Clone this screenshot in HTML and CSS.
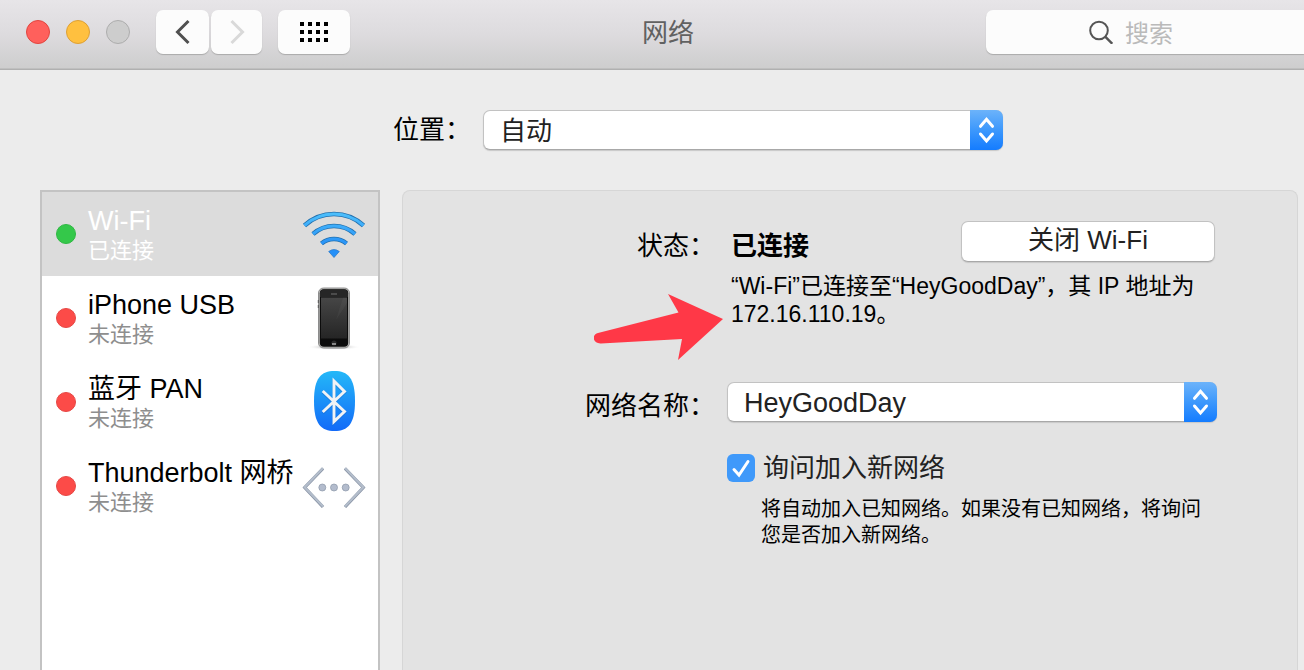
FILE: index.html
```html
<!DOCTYPE html>
<html lang="zh-CN">
<head>
<meta charset="utf-8">
<title>网络</title>
<link rel="stylesheet" href="styles.css">
</head>
<body>
<header class="toolbar">
  <div class="toolbar-left">
    <div class="lights">
      <button class="light light-close" aria-label="关闭"></button>
      <button class="light light-min" aria-label="最小化"></button>
      <button class="light light-zoom" aria-label="缩放" disabled></button>
    </div>
    <div class="history">
      <button class="tool tool-back" aria-label="后退">
        <svg width="16" height="26" viewBox="0 0 16 26"><path d="M13.500 2 2.500 13 13.500 24" fill="none" stroke="#505050" stroke-width="3"/></svg>
      </button>
      <button class="tool tool-forward" aria-label="前进" disabled>
        <svg width="16" height="26" viewBox="0 0 16 26"><path d="M2.500 2 13.500 13 2.500 24" fill="none" stroke="#d9d9d9" stroke-width="3"/></svg>
      </button>
    </div>
    <button class="tool tool-all" aria-label="显示全部">
      <svg width="28" height="20" viewBox="0 0 28 20"><path d="M0 0h4v4H0zM8 0h4v4H8zM16 0h4v4h-4zM24 0h4v4h-4zM0 8h4v4H0zM8 8h4v4H8zM16 8h4v4h-4zM24 8h4v4h-4zM0 16h4v4H0zM8 16h4v4H8zM16 16h4v4h-4zM24 16h4v4h-4z"/></svg>
    </button>
  </div>
  <h1 class="title">网络</h1>
  <div class="search">
    <svg width="24" height="24" viewBox="0 0 24 24"><g fill="none" stroke="#555" stroke-width="2"><circle cx="10" cy="10.500" r="8.800"/><path d="M16.200 16.700 23.300 23.800" stroke-width="2.400"/></g></svg>
    <input class="search-input" type="search" placeholder="搜索" aria-label="搜索">
  </div>
</header>

<main class="content">
  <div class="location">
    <label class="label" for="location">位置：</label>
    <div class="popup popup-location">
      <select class="popup-select" id="location"><option>自动</option></select>
      <svg class="popup-arrows" viewBox="0 0 33 40"><path d="M10.500 16.300 16.500 9.300l6 7M10.500 24 16.500 31l6-7"/></svg>
    </div>
  </div>

  <div class="panes">
    <ul class="services">
      <li class="service service-selected">
        <span class="dot dot-on"></span>
        <div class="service-text">
          <div class="service-name">Wi-Fi</div>
          <div class="service-state">已连接</div>
        </div>
        <svg class="service-icon" viewBox="0 0 64 64">
          <defs>
            <linearGradient id="wave" gradientUnits="userSpaceOnUse" x1="0" y1="9" x2="0" y2="50"><stop offset="0" stop-color="#4fc2fb"/><stop offset="1" stop-color="#1f87f6"/></linearGradient>
            <g id="arcs"><path d="M2.500 23.500A43.600 43.600 0 0 1 61.500 23.500M11 32A31.500 31.500 0 0 1 53 32M19.500 41.500A19.600 19.600 0 0 1 44.500 41.500"/></g>
          </defs>
          <use href="#arcs" fill="none" stroke="#2270ae" stroke-width="4.600"/>
          <use href="#arcs" fill="none" stroke="url(#wave)" stroke-width="3.200"/>
          <path d="M26.700 49.500Q32 45.500 37.300 49.500L32 55.500Z" fill="#2490f8" stroke="#2276c8" stroke-width=".7"/>
        </svg>
      </li>
      <li class="service">
        <span class="dot dot-off"></span>
        <div class="service-text">
          <div class="service-name">iPhone USB</div>
          <div class="service-state">未连接</div>
        </div>
        <svg class="service-icon" viewBox="0 0 64 64">
          <defs>
            <linearGradient id="screen" x1="0" y1="0" x2="0" y2="1"><stop offset="0" stop-color="#464646"/><stop offset="1" stop-color="#252525"/></linearGradient>
            <radialGradient id="shade"><stop offset="0" stop-color="#777"/><stop offset="1" stop-color="#fff" stop-opacity="0"/></radialGradient>
          </defs>
          <ellipse cx="32" cy="61" rx="27" ry="3" fill="url(#shade)"/>
          <rect x="16.500" y="2" width="31" height="60" rx="5" fill="#bdbdbb" stroke="#777" stroke-width=".8"/>
          <rect x="17.800" y="3.300" width="28.400" height="57.400" rx="4" fill="#0c0c0c"/>
          <path d="M18 11V7Q18 3.500 22 3.500H42Q46 3.500 46 7V11Z" fill="#262626"/>
          <rect x="19" y="11.500" width="26" height="41" fill="url(#screen)"/>
          <path d="M45 11.500V17L34 34 41 11.500Z" fill="#fff" opacity=".04"/>
          <path d="M29 8h6" stroke="#666" stroke-width="1.200"/>
          <circle cx="32" cy="57" r="2.600" fill="#292929"/>
          <path d="M30 58h4" stroke="#bbb" stroke-width="1.300"/>
          <path d="M16.300 14v3M16.300 19v3" stroke="#555"/>
        </svg>
      </li>
      <li class="service">
        <span class="dot dot-off"></span>
        <div class="service-text">
          <div class="service-name">蓝牙 PAN</div>
          <div class="service-state">未连接</div>
        </div>
        <svg class="service-icon" viewBox="0 0 64 64">
          <defs><linearGradient id="tooth" x1="0" y1="0" x2="0" y2="1"><stop offset="0" stop-color="#24b8f8"/><stop offset="1" stop-color="#126af8"/></linearGradient></defs>
          <path d="M32.500 1C46 1 53 8 53 31S46 61 32.500 61 12 54 12 31 19 1 32.500 1Z" fill="url(#tooth)"/>
          <path d="M20.700 21 42.500 41.500 32 51.500V11L42.500 21.500 20.700 42" fill="none" stroke="#1765c4" stroke-width="3.200" opacity=".4" transform="translate(0 1)"/>
          <path d="M20.700 21 42.500 41.500 32 51.500V11L42.500 21.500 20.700 42" fill="none" stroke="#f1f3f5" stroke-width="2.900"/>
        </svg>
      </li>
      <li class="service">
        <span class="dot dot-off"></span>
        <div class="service-text">
          <div class="service-name">Thunderbolt 网桥</div>
          <div class="service-state">未连接</div>
        </div>
        <svg class="service-icon" viewBox="0 0 64 64">
          <g fill="none" stroke="#8893a5" stroke-width="3.200"><path d="M21 14.500 2.700 33.500 21 53M43 14.500 61.300 33.500 43 53"/></g>
          <g fill="none" stroke="#b3bdcb" stroke-width="2.200"><path d="M21 14 2.700 33.300 21 52.500M43 14 61.300 33.300 43 52.500"/></g>
          <g fill="#b3bccd" stroke="#8b96a8" stroke-width=".7"><circle cx="20.300" cy="33.500" r="3.500"/><circle cx="32" cy="33.500" r="3.500"/><circle cx="43.700" cy="33.500" r="3.500"/></g>
        </svg>
      </li>
    </ul>

    <section class="details">
      <div class="form">
        <span class="label">状态：</span>
        <div class="status">
          <strong class="status-value">已连接</strong>
          <button class="push">关闭 Wi-Fi</button>
        </div>
        <p class="message">“Wi-Fi”已连接至“HeyGoodDay”，其 IP 地址为 172.16.110.19。</p>
        <label class="label" for="ssid">网络名称：</label>
        <div class="popup">
          <select class="popup-select" id="ssid"><option>HeyGoodDay</option></select>
          <svg class="popup-arrows" viewBox="0 0 33 40"><path d="M10.500 16.300 16.500 9.300l6 7M10.500 24 16.500 31l6-7"/></svg>
        </div>
        <div class="join">
          <label class="check">
            <input class="check-input" type="checkbox" checked>
            <svg class="check-mark" viewBox="0 0 28 28"><path d="M7 15.500 12 21 21 7.500"/></svg>
            <span>询问加入新网络</span>
          </label>
          <p class="note">将自动加入已知网络。如果没有已知网络，将询问您是否加入新网络。</p>
        </div>
      </div>
      <svg class="pointer" viewBox="0 0 129 66"><path d="M129 25 84 66 88 45 7 49.500C-1 50-3 41 4 39L84.500 18.500 74 0Z" fill="#ff3847"/></svg>
    </section>
  </div>
</main>
</body>
</html>
```

FILE: styles.css
```css
* {
  box-sizing: border-box;
}

body {
  margin: 0;
  height: 100vh;
  display: flex;
  flex-direction: column;
  overflow: hidden;
  background: #ececec;
  color: #000;
  font: 26px/32px "Liberation Sans", "Noto Sans CJK SC", sans-serif;
}

button,
input,
select {
  font: inherit;
  color: inherit;
  margin: 0;
}

.toolbar {
  flex: none;
  height: 70px;
  display: grid;
  grid-template-columns: 1fr auto 1fr;
  align-items: center;
  padding: 0 0 5px 26px;
  background: linear-gradient(#e7e5e8, #dddbde 50%, #cdcdcd);
  border-bottom: 1px solid #b0b0b0;
  box-shadow: inset 0 -1px #bfbfbf;
}

.toolbar-left,
.lights,
.history {
  display: flex;
  align-items: center;
}

.lights {
  gap: 16px;
  margin-right: 26px;
}

.history {
  gap: 2px;
  margin-right: 16px;
}

.light {
  width: 24px;
  height: 24px;
  padding: 0;
  border: 1px solid;
  border-radius: 50%;
}

.light-close {
  background: #ff605c;
  border-color: #e2453f;
}

.light-min {
  background: #ffc03f;
  border-color: #dea034;
}

.light-zoom {
  background: #cdcdcd;
  border-color: #adadad;
}

.tool {
  display: flex;
  align-items: center;
  justify-content: center;
  height: 44px;
  padding: 0;
  border: 0;
  border-radius: 7px;
  background: #fcfcfc;
  box-shadow: 0 1px 1px #aaa;
}

.tool-back {
  width: 53px;
}

.tool-forward {
  width: 51px;
}

.tool-all {
  width: 72px;
}

.title {
  margin: 0;
  padding: 2px 0 0 6px;
  font-size: 26px;
  font-weight: 400;
  color: #616161;
}

.search {
  justify-self: end;
  display: flex;
  align-items: center;
  gap: 12px;
  width: 318px;
  height: 44px;
  padding-left: 103px;
  border-radius: 7px 0 0 7px;
  background: #fcfcfc;
  box-shadow: 0 1px 1px #aaa;
}

.search svg {
  flex: none;
}

.search-input {
  flex: 1;
  min-width: 0;
  padding: 4px 0 0;
  border: 0;
  outline: 0;
  background: none;
  font-size: 24px;
}

.search-input::placeholder {
  color: #bababa;
}

.content {
  flex: 1;
  min-height: 0;
  display: flex;
  flex-direction: column;
  gap: 40px;
  padding: 40px 6px 0 40px;
}

.location {
  display: flex;
  justify-content: center;
  align-items: center;
  gap: 12px;
  padding-left: 58px;
}

.popup {
  position: relative;
  height: 40px;
}

.popup-location {
  width: 520px;
}

.popup-select {
  appearance: none;
  display: block;
  width: 100%;
  height: 40px;
  padding: 2px 48px 0 16px;
  border: 1px solid #c2c2c2;
  border-bottom-color: #a8a8a8;
  border-radius: 7px;
  background: #fff;
  box-shadow: 0 1px 1px #c8c8c8;
  color: #222;
  font-size: 27px;
}

.popup-location .popup-select {
  font-size: 26px;
}

.popup-arrows {
  position: absolute;
  top: 0;
  right: 0;
  width: 33px;
  height: 40px;
  border-radius: 0 7px 7px 0;
  background: linear-gradient(#6cb3fa, #3d98fc 50%, #147cff);
  fill: none;
  stroke: #fff;
  stroke-width: 3;
  stroke-linecap: round;
  pointer-events: none;
}

.panes {
  flex: 1;
  min-height: 0;
  display: flex;
  gap: 22px;
}

.services {
  flex: none;
  width: 340px;
  margin: 0;
  padding: 0;
  list-style: none;
  background: #fff;
  border: 2px solid #c3c3c3;
  border-bottom: 0;
}

.service {
  display: flex;
  align-items: center;
  height: 84px;
  padding: 0 12px 0 14px;
}

.service-selected {
  background: #dcdcdc;
  color: #fff;
}

.dot {
  flex: none;
  width: 20px;
  height: 20px;
  margin-right: 12px;
  border-radius: 50%;
}

.dot-on {
  background: #34c84a;
  border: 1px solid #2fb843;
}

.dot-off {
  background: #fc4b48;
  border: 1px solid #e64845;
}

.service-text {
  flex: 1;
  min-width: 0;
  padding-top: 2px;
  white-space: nowrap;
}

.service-name {
  font-size: 27px;
  line-height: 32px;
}

.service-state {
  font-size: 22px;
  line-height: 28px;
  color: #8e8e8e;
}

.service-selected .service-state {
  color: #fff;
}

.service-icon {
  flex: none;
  width: 64px;
  height: 64px;
}

.details {
  position: relative;
  flex: 1;
  min-width: 0;
  padding-top: 30px;
  background: #e3e3e3;
  border: 1px solid #d6d6d6;
  border-bottom: 0;
  border-radius: 8px 8px 0 0;
}

.form {
  display: grid;
  grid-template-columns: 312px minmax(0, 490px);
  column-gap: 12px;
  align-items: end;
}

.label {
  text-align: right;
  white-space: nowrap;
}

.status {
  display: flex;
  align-items: end;
  justify-content: space-between;
  padding: 0 2px 0 4px;
}

.status-value {
  font-weight: 700;
}

.push {
  width: 254px;
  height: 41px;
  padding: 0 0 3px;
  border: 1px solid #c2c2c2;
  border-bottom-color: #a8a8a8;
  border-radius: 7px;
  background: #fff;
  box-shadow: 0 1px 1px #c8c8c8;
  color: #222;
  font-size: 26px;
}

.message {
  grid-column: 2;
  margin: 10px 0 54px;
  padding-left: 4px;
  font-size: 23px;
  line-height: 28px;
}

.join {
  grid-column: 2;
  margin-top: 32px;
}

.check {
  position: relative;
  display: flex;
  align-items: center;
  gap: 8px;
  height: 28px;
  color: #222;
}

.check-input {
  appearance: none;
  flex: none;
  width: 28px;
  height: 28px;
  border-radius: 6px;
  background: #3f99fa;
}

.check-mark {
  position: absolute;
  left: 0;
  top: 0;
  width: 28px;
  height: 28px;
  fill: none;
  stroke: #fff;
  stroke-width: 3;
  stroke-linecap: round;
}

.check-input:not(:checked) + .check-mark {
  display: none;
}

.note {
  margin: 14px 0 0;
  padding-left: 34px;
  font-size: 20px;
  line-height: 26px;
}

.pointer {
  position: absolute;
  left: 191px;
  top: 103px;
  width: 129px;
  height: 66px;
}
```
